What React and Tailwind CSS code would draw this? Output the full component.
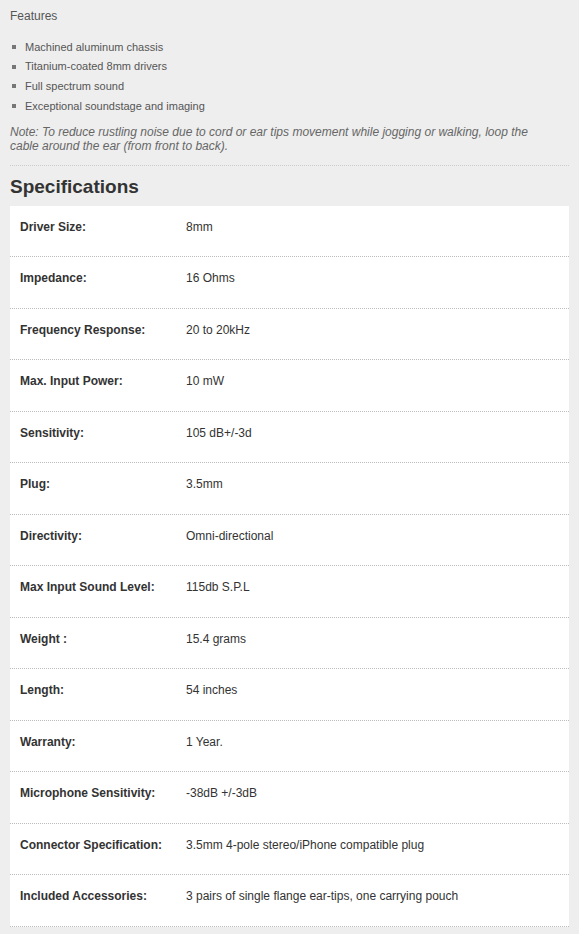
import React from 'react';

const features = [
  'Machined aluminum chassis',
  'Titanium-coated 8mm drivers',
  'Full spectrum sound',
  'Exceptional soundstage and imaging',
];

const specs = [
  ['Driver Size:', '8mm'],
  ['Impedance:', '16 Ohms'],
  ['Frequency Response:', '20 to 20kHz'],
  ['Max. Input Power:', '10 mW'],
  ['Sensitivity:', '105 dB+/-3d'],
  ['Plug:', '3.5mm'],
  ['Directivity:', 'Omni-directional'],
  ['Max Input Sound Level:', '115db S.P.L'],
  ['Weight :', '15.4 grams'],
  ['Length:', '54 inches'],
  ['Warranty:', '1 Year.'],
  ['Microphone Sensitivity:', '-38dB +/-3dB'],
  ['Connector Specification:', '3.5mm 4-pole stereo/iPhone compatible plug'],
  ['Included Accessories:', '3 pairs of single flange ear-tips, one carrying pouch'],
];

const App = () => {
  return (
    <div className="min-h-screen bg-[#eeeeee] font-['Liberation_Sans',Arial,sans-serif]">
      <div className="px-[10px] pt-[8px]">
        <h3 className="text-[12px] leading-[16px] text-[#555]">Features</h3>

        <ul className="mt-[13px] flex flex-col">
          {features.map((f) => (
            <li key={f} className="flex items-center h-[19.7px] text-[11px] text-[#555]">
              <span className="w-[4px] h-[4px] bg-[#777] ml-[2px] mr-[9px]" />
              {f}
            </li>
          ))}
        </ul>

        <p className="mt-[9px] text-[12px] leading-[14px] italic text-[#666] pr-[40px]">
          Note: To reduce rustling noise due to cord or ear tips movement while jogging or walking, loop the cable around the ear (from front to back).
        </p>

        <div className="mt-[12px] border-t border-dotted border-[#cccccc]" />

        <h2 className="mt-[9px] text-[19px] leading-[24px] font-bold text-[#333]">Specifications</h2>

        {/* spec table */}
        <div className="mt-[7px] bg-white">
          {specs.map(([label, value]) => (
            <div
              key={label}
              className="flex items-start h-[51.5px] pt-[14px] leading-[14px] border-b border-dotted border-[#bbbbbb] text-[12px] text-[#333]"
            >
              <div className="w-[176px] pl-[10px] font-bold">{label}</div>
              <div>{value}</div>
            </div>
          ))}
        </div>
      </div>
    </div>
  );
};

export default App;
